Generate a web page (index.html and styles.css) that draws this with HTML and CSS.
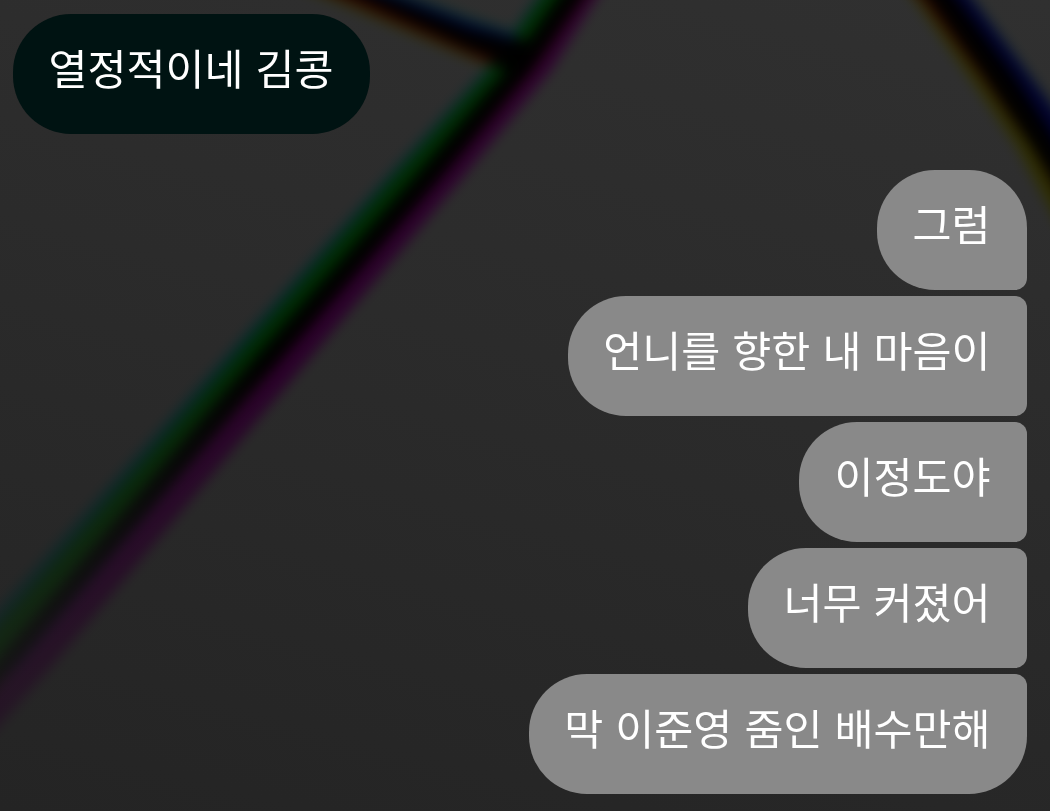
FILE: index.html
```html
<!DOCTYPE html>
<html lang="ko">
<head>
  <meta charset="UTF-8">
  <title>채팅</title>
  <link rel="stylesheet" href="styles.css">
</head>
<body>
  <div class="chat">
    <svg class="wallpaper" width="1050" height="811" viewBox="0 0 1050 811" aria-hidden="true">
      <defs>
        <filter id="soft" filterUnits="userSpaceOnUse" x="-150" y="-100" width="1350" height="1000" color-interpolation-filters="sRGB">
          <feGaussianBlur stdDeviation="6.5"/>
        </filter>
        <linearGradient id="fade" gradientUnits="userSpaceOnUse" x1="260" y1="360" x2="0" y2="680">
          <stop offset="0" stop-color="#fff"/>
          <stop offset="1" stop-color="#777"/>
        </linearGradient>
        <mask id="fadeMask" maskUnits="userSpaceOnUse" x="-150" y="-100" width="1350" height="1000">
          <rect x="-150" y="-100" width="1350" height="1000" fill="url(#fade)"/>
        </mask>
      </defs>
      <!-- each line is split into three colour layers -->
      <g class="layer cyan" mask="url(#fadeMask)">
        <g filter="url(#soft)">
          <path d="M565-40 L535 0 L488 67 L384 180 L187 400 L-43 655 L-140 755 L-90 775 L18 665 L245 400 L439 180 L532 70 L581 0 L610-40Z"/>
          <path d="M320-40 L422 0 L470 18 L530 37 L520 62 L500 60 L470 49 L368 2 L280-40Z"/>
          <path d="M895-40 L930 0 L984 75 L1031 145 L1086 235 L1130 215 L1078 140 L1030 75 L974 0 L942-40Z"/>
        </g>
      </g>
      <g class="layer magenta" mask="url(#fadeMask)">
        <g filter="url(#soft)">
          <path d="M586-40 L556 0 L509 67 L412 180 L218 400 L-10 668 L-100 775 L-45 775 L50 668 L274 400 L460 180 L551 70 L595 0 L623-40Z"/>
          <path d="M300-40 L410 0 L470 23 L530 42 L525 75 L500 68 L470 54 L356 4 L250-40Z"/>
          <path d="M886-40 L923 0 L980 75 L1030 145 L1086 240 L1130 215 L1080 145 L1028 75 L972 0 L940-40Z"/>
        </g>
      </g>
      <g class="layer yellow" mask="url(#fadeMask)">
        <g filter="url(#soft)">
          <path d="M571-40 L541 0 L495 67 L393 180 L199 400 L-34 662 L-125 765 L-75 775 L14 667 L246 400 L440 180 L534 70 L583 0 L613-40Z"/>
          <path d="M285-40 L395 0 L470 30 L530 45 L525 75 L490 67 L470 59 L342 4 L230-40Z"/>
          <path d="M882-40 L915 0 L968 75 L1016 145 L1062 230 L1110 225 L1059 145 L1014 75 L958 0 L922-40Z"/>
        </g>
      </g>
    </svg>

    <div class="messages">
      <div class="bubble received">열정적이네 김콩</div>
      <div class="sent-group">
        <div class="bubble sent">그럼</div>
        <div class="bubble sent">언니를 향한 내 마음이</div>
        <div class="bubble sent">이정도야</div>
        <div class="bubble sent">너무 커졌어</div>
        <div class="bubble sent">막 이준영 줌인 배수만해</div>
      </div>
    </div>
  </div>
</body>
</html>
```
FILE: styles.css
```css
body {
  margin: 0;
  font-family: "Noto Sans CJK KR", sans-serif;
  background: #262626;
}
.chat {
  position: relative;
  isolation: isolate;
  height: 811px;
  overflow: hidden;
  background: linear-gradient(195deg, #303030 0%, #2b2b2b 45%, #242424 100%);
}
.wallpaper {
  position: absolute;
  top: 0;
  left: 0;
}
.wallpaper,
.layer {
  mix-blend-mode: multiply;
}
.cyan {
  fill: #0ff;
}
.magenta {
  fill: #f0f;
}
.yellow {
  fill: #ff0;
}
.messages {
  position: relative;
  display: flex;
  flex-direction: column;
  align-items: flex-start;
  gap: 36px;
  padding: 14px 23px 0 13px;
}
.bubble {
  box-sizing: border-box;
  height: 120px;
  padding: 23px 36.5px 37px 35.5px;
  border-radius: 58px;
  color: #fff;
  font-size: 42.4px;
  line-height: 60px;
  word-spacing: 0.2px;
  white-space: nowrap;
}
.received {
  background: #001312;
}
.sent-group {
  display: flex;
  flex-direction: column;
  align-items: flex-end;
  align-self: flex-end;
  gap: 6px;
}
.sent {
  border-radius: 58px 12px 12px 58px;
  background: #898989;
}
.sent:first-child {
  border-top-right-radius: 58px;
}
.sent:last-child {
  border-bottom-right-radius: 58px;
}
```
